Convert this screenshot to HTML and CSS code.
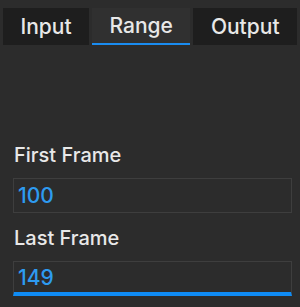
FILE: index.html
```html
<!DOCTYPE html>
<html lang="en">

<head>
	<meta charset="UTF-8">
	<title>Range</title>
	<link rel="stylesheet" href="styles.css">
</head>

<body>
	<div class="tabs">
		<div class="tab">Input</div>
		<div class="tab active">Range</div>
		<div class="tab">Output</div>
	</div>

	<div class="form">
		<div class="label">First Frame</div>
		<div class="field">100</div>
		<div class="label">Last Frame</div>
		<div class="field focused">149</div>
	</div>
</body>

</html>
```

FILE: styles.css
```css
html {
	height: 100%;
}

body {
	height: 100%;
	margin: 0;
	background: #2c2c2c;
	font-family: 'Inter', 'Liberation Sans', sans-serif;
	color: #e8e8e8;
}

.tabs {
	display: flex;
	gap: 3px;
	padding: 8px 3px 0;
}

.tab {
	flex: 1 1 auto;
	height: 37px;
	box-sizing: border-box;
	display: flex;
	align-items: center;
	justify-content: center;
	background: #1e1e1e;
	font-size: 21px;
	font-weight: 500;
}

.tab.active {
	background: #303030;
	border-bottom: 2px solid #1a8cf0;
}

.form {
	padding: 98px 8px 0 13px;
}

.label {
	font-size: 20px;
	font-weight: 500;
	line-height: 24px;
	height: 24px;
	padding-left: 1px;
	margin-bottom: 11px;
}

.field {
	height: 35px;
	box-sizing: border-box;
	border: 1px solid #3e3e3e;
	padding-left: 4px;
	color: #2e9bf0;
	font-size: 21px;
	font-weight: 500;
	line-height: 33px;
	margin-bottom: 13px;
}

.field.focused {
	border-bottom: 4px solid #0f8cf5;
	line-height: 31px;
}
```
